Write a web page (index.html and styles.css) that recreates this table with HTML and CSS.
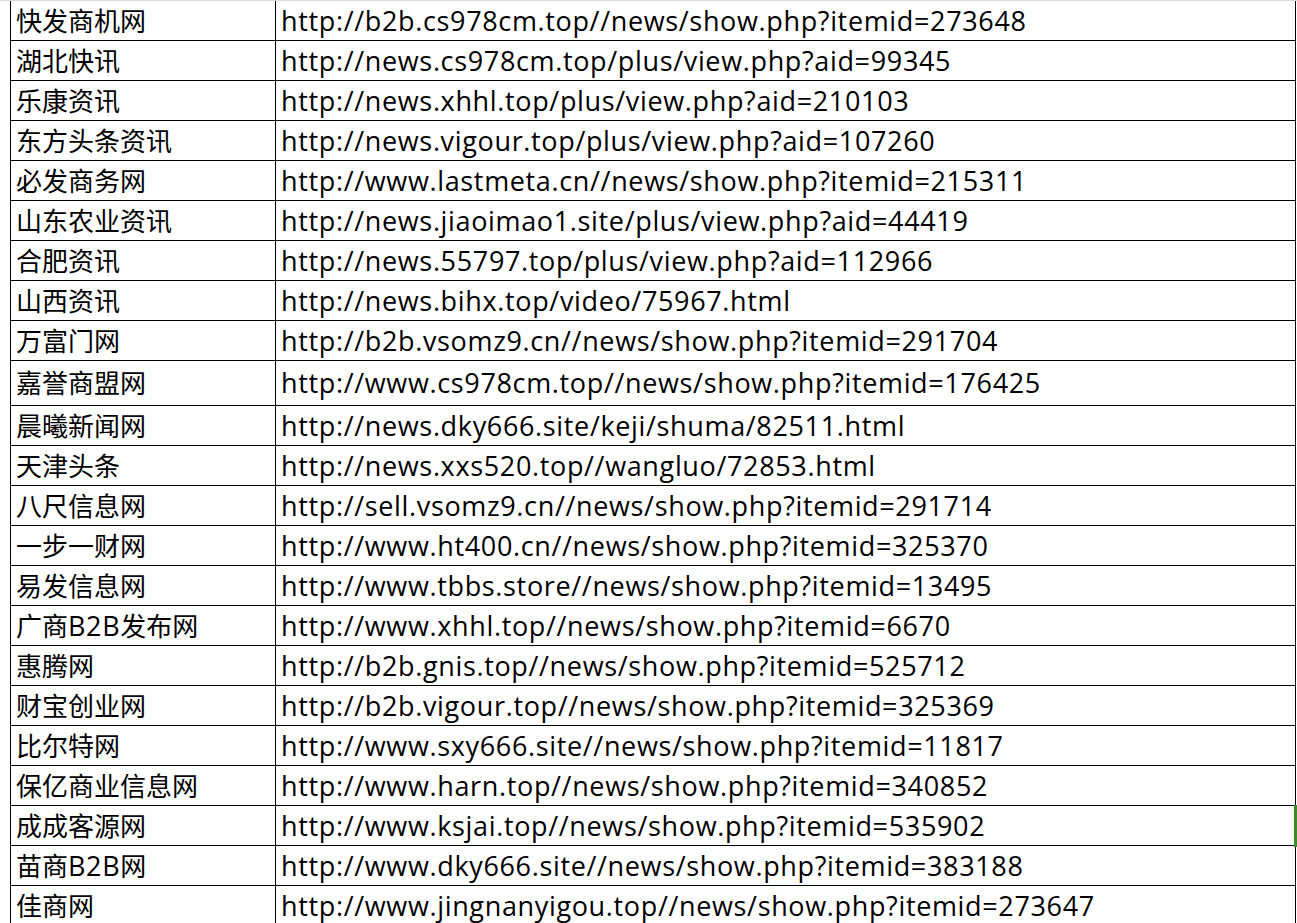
FILE: index.html
```html
<!DOCTYPE html>
<html lang="zh-CN">
<head>
  <meta charset="UTF-8">
  <title>网站列表</title>
  <link rel="stylesheet" href="styles.css">
</head>
<body>
  <div class="sheet">
    <table class="grid">
      <colgroup>
        <col class="col-name">
        <col class="col-url">
      </colgroup>
      <tbody>
        <tr><td>快发商机网</td><td class="url">http://b2b.cs978cm.top//news/show.php?itemid=273648</td></tr>
        <tr><td>湖北快讯</td><td class="url">http://news.cs978cm.top/plus/view.php?aid=99345</td></tr>
        <tr><td>乐康资讯</td><td class="url">http://news.xhhl.top/plus/view.php?aid=210103</td></tr>
        <tr><td>东方头条资讯</td><td class="url">http://news.vigour.top/plus/view.php?aid=107260</td></tr>
        <tr><td>必发商务网</td><td class="url">http://www.lastmeta.cn//news/show.php?itemid=215311</td></tr>
        <tr><td>山东农业资讯</td><td class="url">http://news.jiaoimao1.site/plus/view.php?aid=44419</td></tr>
        <tr><td>合肥资讯</td><td class="url">http://news.55797.top/plus/view.php?aid=112966</td></tr>
        <tr><td>山西资讯</td><td class="url">http://news.bihx.top/video/75967.html</td></tr>
        <tr><td>万富门网</td><td class="url">http://b2b.vsomz9.cn//news/show.php?itemid=291704</td></tr>
        <tr class="tall"><td>嘉誉商盟网</td><td class="url">http://www.cs978cm.top//news/show.php?itemid=176425</td></tr>
        <tr><td>晨曦新闻网</td><td class="url">http://news.dky666.site/keji/shuma/82511.html</td></tr>
        <tr><td>天津头条</td><td class="url">http://news.xxs520.top//wangluo/72853.html</td></tr>
        <tr><td>八尺信息网</td><td class="url">http://sell.vsomz9.cn//news/show.php?itemid=291714</td></tr>
        <tr><td>一步一财网</td><td class="url">http://www.ht400.cn//news/show.php?itemid=325370</td></tr>
        <tr><td>易发信息网</td><td class="url">http://www.tbbs.store//news/show.php?itemid=13495</td></tr>
        <tr><td>广商<span class="latin">B2B</span>发布网</td><td class="url">http://www.xhhl.top//news/show.php?itemid=6670</td></tr>
        <tr><td>惠腾网</td><td class="url">http://b2b.gnis.top//news/show.php?itemid=525712</td></tr>
        <tr><td>财宝创业网</td><td class="url">http://b2b.vigour.top//news/show.php?itemid=325369</td></tr>
        <tr><td>比尔特网</td><td class="url">http://www.sxy666.site//news/show.php?itemid=11817</td></tr>
        <tr><td>保亿商业信息网</td><td class="url">http://www.harn.top//news/show.php?itemid=340852</td></tr>
        <tr><td>成成客源网</td><td class="url">http://www.ksjai.top//news/show.php?itemid=535902</td></tr>
        <tr><td>苗商<span class="latin">B2B</span>网</td><td class="url">http://www.dky666.site//news/show.php?itemid=383188</td></tr>
        <tr><td>佳商网</td><td class="url">http://www.jingnanyigou.top//news/show.php?itemid=273647</td></tr>
      </tbody>
    </table>
    <div class="select-mark"></div>
  </div>
</body>
</html>
```

FILE: styles.css
```css
body {
  margin: 0;
  background: #fff;
  font-family: "Open Sans", "Noto Sans CJK SC", sans-serif;
  color: #000;
  overflow: hidden;
}
.sheet {
  position: relative;
  padding-left: 10px;
  border-top: 1px solid #d9d9d9;
}
.grid {
  border-collapse: collapse;
  table-layout: fixed;
  width: 1286px;
}
.col-name {
  width: 265px;
}
.grid td {
  height: 39px;
  padding: 0 5px;
  border: 1px solid #000;
  font-size: 26px;
  line-height: 30px;
  white-space: nowrap;
  vertical-align: middle;
}
.grid td.url,
.grid .latin {
  font-size: 27px;
  letter-spacing: 0.65px;
}
.grid tr:first-child td {
  border-top: none;
}
.grid tr.tall td {
  height: 44px;
}
.select-mark {
  position: absolute;
  right: 0;
  top: 804px;
  width: 3px;
  height: 42px;
  background: #3c8c2a;
}
```
